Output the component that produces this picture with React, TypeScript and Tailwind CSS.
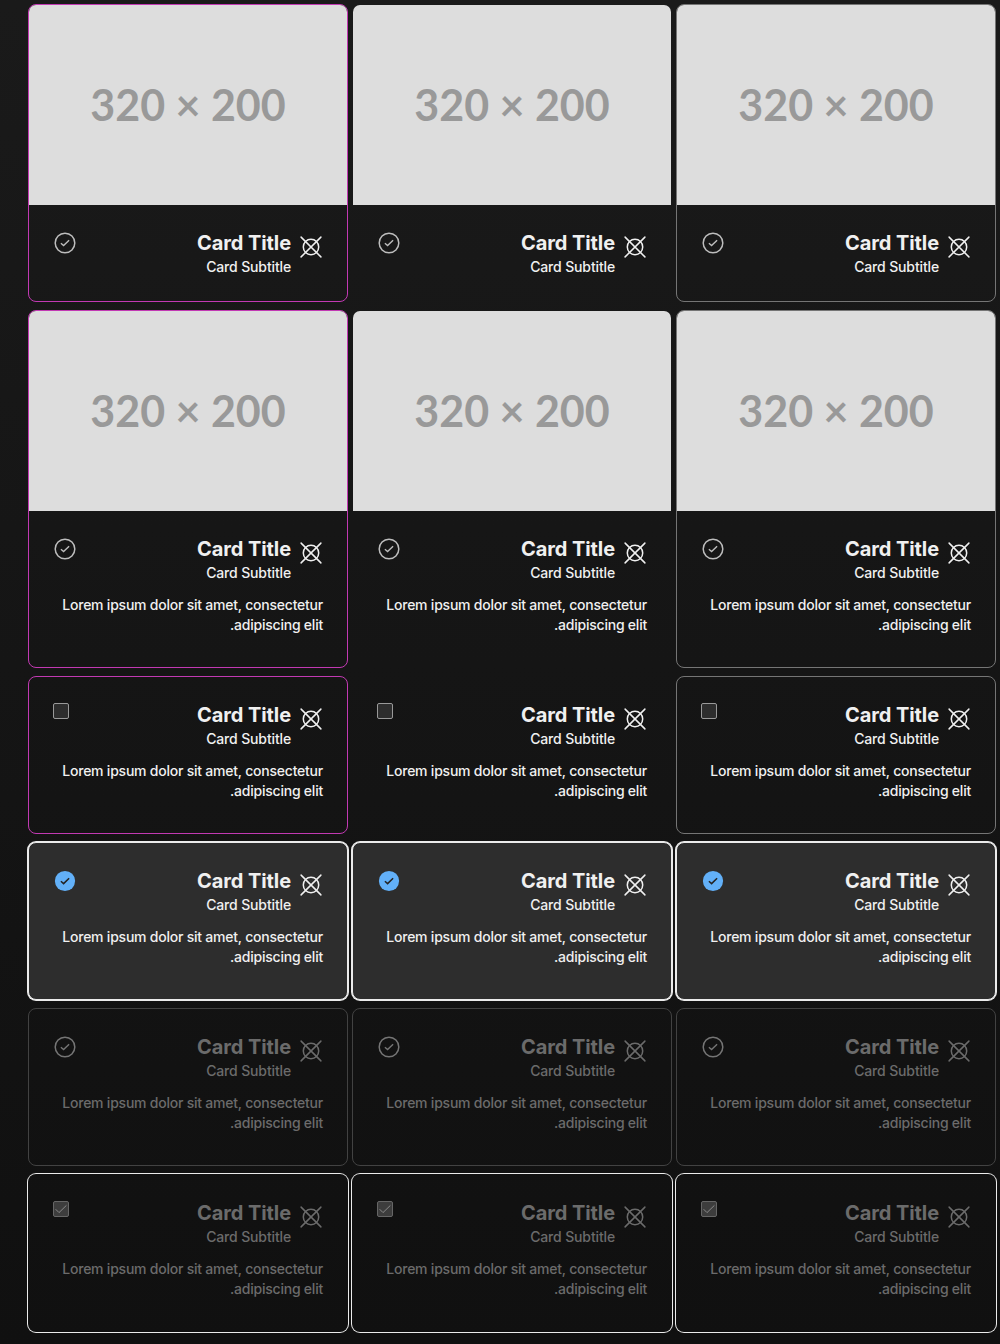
type Variant = "brand" | "plain" | "outline";
type Control = "radio" | "checkbox";
type State = "rest" | "selected" | "disabled" | "disabledSelected";

interface RowSpec {
  media: boolean;
  body: boolean;
  control: Control;
  state: State;
}

const rows: RowSpec[] = [
  { media: true, body: false, control: "radio", state: "rest" },
  { media: true, body: true, control: "radio", state: "rest" },
  { media: false, body: true, control: "checkbox", state: "rest" },
  { media: false, body: true, control: "radio", state: "selected" },
  { media: false, body: true, control: "radio", state: "disabled" },
  { media: false, body: true, control: "checkbox", state: "disabledSelected" },
];

const variants: Variant[] = ["brand", "plain", "outline"];

const restBorder: Record<Variant, string> = {
  brand: "border-[#c239b3]",
  plain: "border-transparent",
  outline: "border-[#757575]",
};

function frameClass(variant: Variant, state: State) {
  if (state === "selected") return "border-[#ebebeb] bg-[#2d2d2d] ring-1 ring-[#ebebeb]";
  if (state === "disabled") return "border-[#424242]";
  if (state === "disabledSelected") return "border-transparent ring-1 ring-[#ebebeb]";
  return restBorder[variant];
}

function CircleX() {
  return (
    <svg className="size-6 shrink-0" viewBox="0 0 24 24" fill="none" stroke="currentColor" strokeWidth="1.5" strokeLinecap="round">
      <circle cx="12" cy="12" r="7.7" />
      <path d="M2.1 2.1 21.9 21.9M21.9 2.1 2.1 21.9" />
    </svg>
  );
}

function RadioMark({ state }: { state: State }) {
  if (state === "selected") {
    return (
      <svg className="size-6" viewBox="0 0 24 24" fill="none">
        <circle cx="12" cy="12" r="10.1" fill="#62b0f8" />
        <path d="M7.9 12.2 10.6 14.6 16.1 9.2" stroke="#242424" strokeWidth="1.5" />
      </svg>
    );
  }
  return (
    <svg
      className={`size-6 ${state === "disabled" ? "text-[#757575]" : "text-[#bdbdbd]"}`}
      viewBox="0 0 24 24"
      fill="none"
      stroke="currentColor"
    >
      <circle cx="12" cy="12" r="9.8" strokeWidth="1.5" />
      <path d="M7.9 12.2 10.6 14.6 16.1 9.2" strokeWidth="1.4" />
    </svg>
  );
}

function CheckboxMark({ checked }: { checked: boolean }) {
  return (
    <span
      className={`flex size-4 items-center justify-center rounded-[2px] border ${
        checked ? "border-[#666666] bg-[#3d3d3d] text-[#8a8a8a]" : "border-[#999999] bg-[#2d2d2d]"
      }`}
    >
      {checked && (
        <svg className="size-3.5 shrink-0" viewBox="0 0 14 14" fill="none" stroke="currentColor">
          <path d="M1.6 7.2 5 10.6 12.4 3.4" />
        </svg>
      )}
    </span>
  );
}

function Card({ variant, row }: { variant: Variant; row: RowSpec }) {
  const dim = row.state === "disabled" || row.state === "disabledSelected";
  return (
    <article
      dir="rtl"
      className={`w-80 rounded-lg border text-right ${frameClass(variant, row.state)} ${
        dim ? "text-[#6b6b6b]" : "text-[#f0f0f0]"
      }`}
    >
      {row.media && (
        <div
          dir="ltr"
          className="flex h-[200px] items-center justify-center rounded-t-[7px] bg-[#dddddd] pb-0.5 font-['Lato'] text-[43px] leading-none font-bold text-[#999999]"
        >
          320 × 200
        </div>
      )}
      <div className={`px-6 pt-6 ${row.body ? "pb-8" : "pb-6"}`}>
        <header className="flex items-start gap-2">
          <span className="pt-1.5">
            <CircleX />
          </span>
          <div className="grow">
            <h2 className="text-[20px] leading-7 font-bold tracking-[-0.1px]">Card Title</h2>
            <p className="text-sm leading-5 font-medium tracking-[-0.14px]">Card Subtitle</p>
          </div>
          <span className="pt-0.5">
            {row.control === "radio" ? (
              <RadioMark state={row.state} />
            ) : (
              <CheckboxMark checked={row.state === "disabledSelected"} />
            )}
          </span>
        </header>
        {row.body && (
          <p className="mt-3 text-sm leading-5 font-medium tracking-[-0.225px]">
            Lorem ipsum dolor sit amet, consectetur adipiscing elit.
          </p>
        )}
      </div>
    </article>
  );
}

export default function App() {
  return (
    <main className="flex h-[1344px] flex-col gap-2 overflow-hidden bg-linear-to-b from-[#1a1a1a] to-[#101010] pt-1 pl-7 font-['Inter',sans-serif]">
      {rows.map((row, i) => (
        <section key={i} className="flex gap-1">
          {variants.map((variant) => (
            <Card key={variant} variant={variant} row={row} />
          ))}
        </section>
      ))}
    </main>
  );
}
